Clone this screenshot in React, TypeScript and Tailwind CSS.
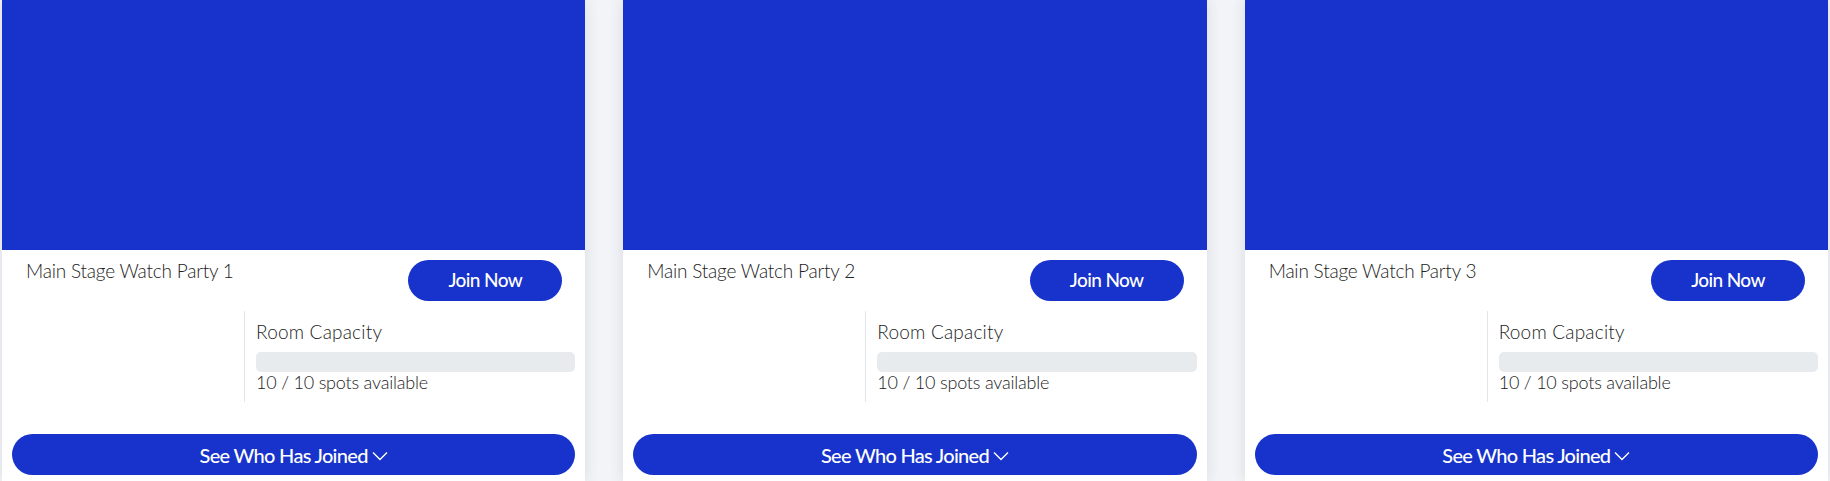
import React from "react";

const parties = [1, 2, 3];

const Chevron = () => (
  <svg width="16" height="10" viewBox="0 0 16 10" fill="none" className="ml-[4px] mt-[2px]">
    <path d="M1 1.5l7 7 7-7" stroke="currentColor" strokeWidth="1.4" />
  </svg>
);

const PartyCard = ({ n }: { n: number }) => {
  return (
    <div className="bg-white flex flex-col shadow-[0_0_14px_rgba(30,40,80,0.12)]">
      {/* cover */}
      <div className="h-[250px] bg-[#1733cb]" />
      <div className="px-[10px] pb-[6px]">
        <div className="flex justify-between items-start pt-[10px] pl-[14px] pr-[13px]">
          <h3 className="text-[19px] leading-[22px] font-light text-[#222] tracking-[-0.2px]">
            Main Stage Watch Party {n}
          </h3>
          <button className="w-[154px] h-[41px] rounded-full bg-[#1733cb] text-white text-[19px] font-medium tracking-[-0.6px]">
            Join Now
          </button>
        </div>
        <div className="flex mt-[10px]">
          <div className="w-[232px]" />
          <div className="flex-1 border-l border-[#e3e5ea] pl-[11px] pt-[10px] pb-[10px] text-[#222] font-light">
            <div className="text-[19px] leading-[22px] tracking-[0.2px]">Room Capacity</div>
            <div className="h-[20px] rounded-[5px] bg-[#e8ebee] mt-[9px]" />
            <div className="text-[18px] leading-[20px] tracking-[-0.2px]">10 / 10 spots available</div>
          </div>
        </div>
        <button className="mt-[32px] w-full h-[41px] rounded-full bg-[#1733cb] text-white text-[20px] font-medium tracking-[-0.7px] flex items-center justify-center">
          See Who Has Joined
          <Chevron />
        </button>
      </div>
    </div>
  );
};

export default function App() {
  return (
    <div
      className="min-h-screen bg-[#f3f4f7] px-[2px] overflow-hidden"
      style={{ fontFamily: "Lato, 'Open Sans', sans-serif" }}
    >
      <div className="grid grid-cols-3 gap-[38px]">
        {parties.map((n) => (
          <PartyCard key={n} n={n} />
        ))}
      </div>
    </div>
  );
}
